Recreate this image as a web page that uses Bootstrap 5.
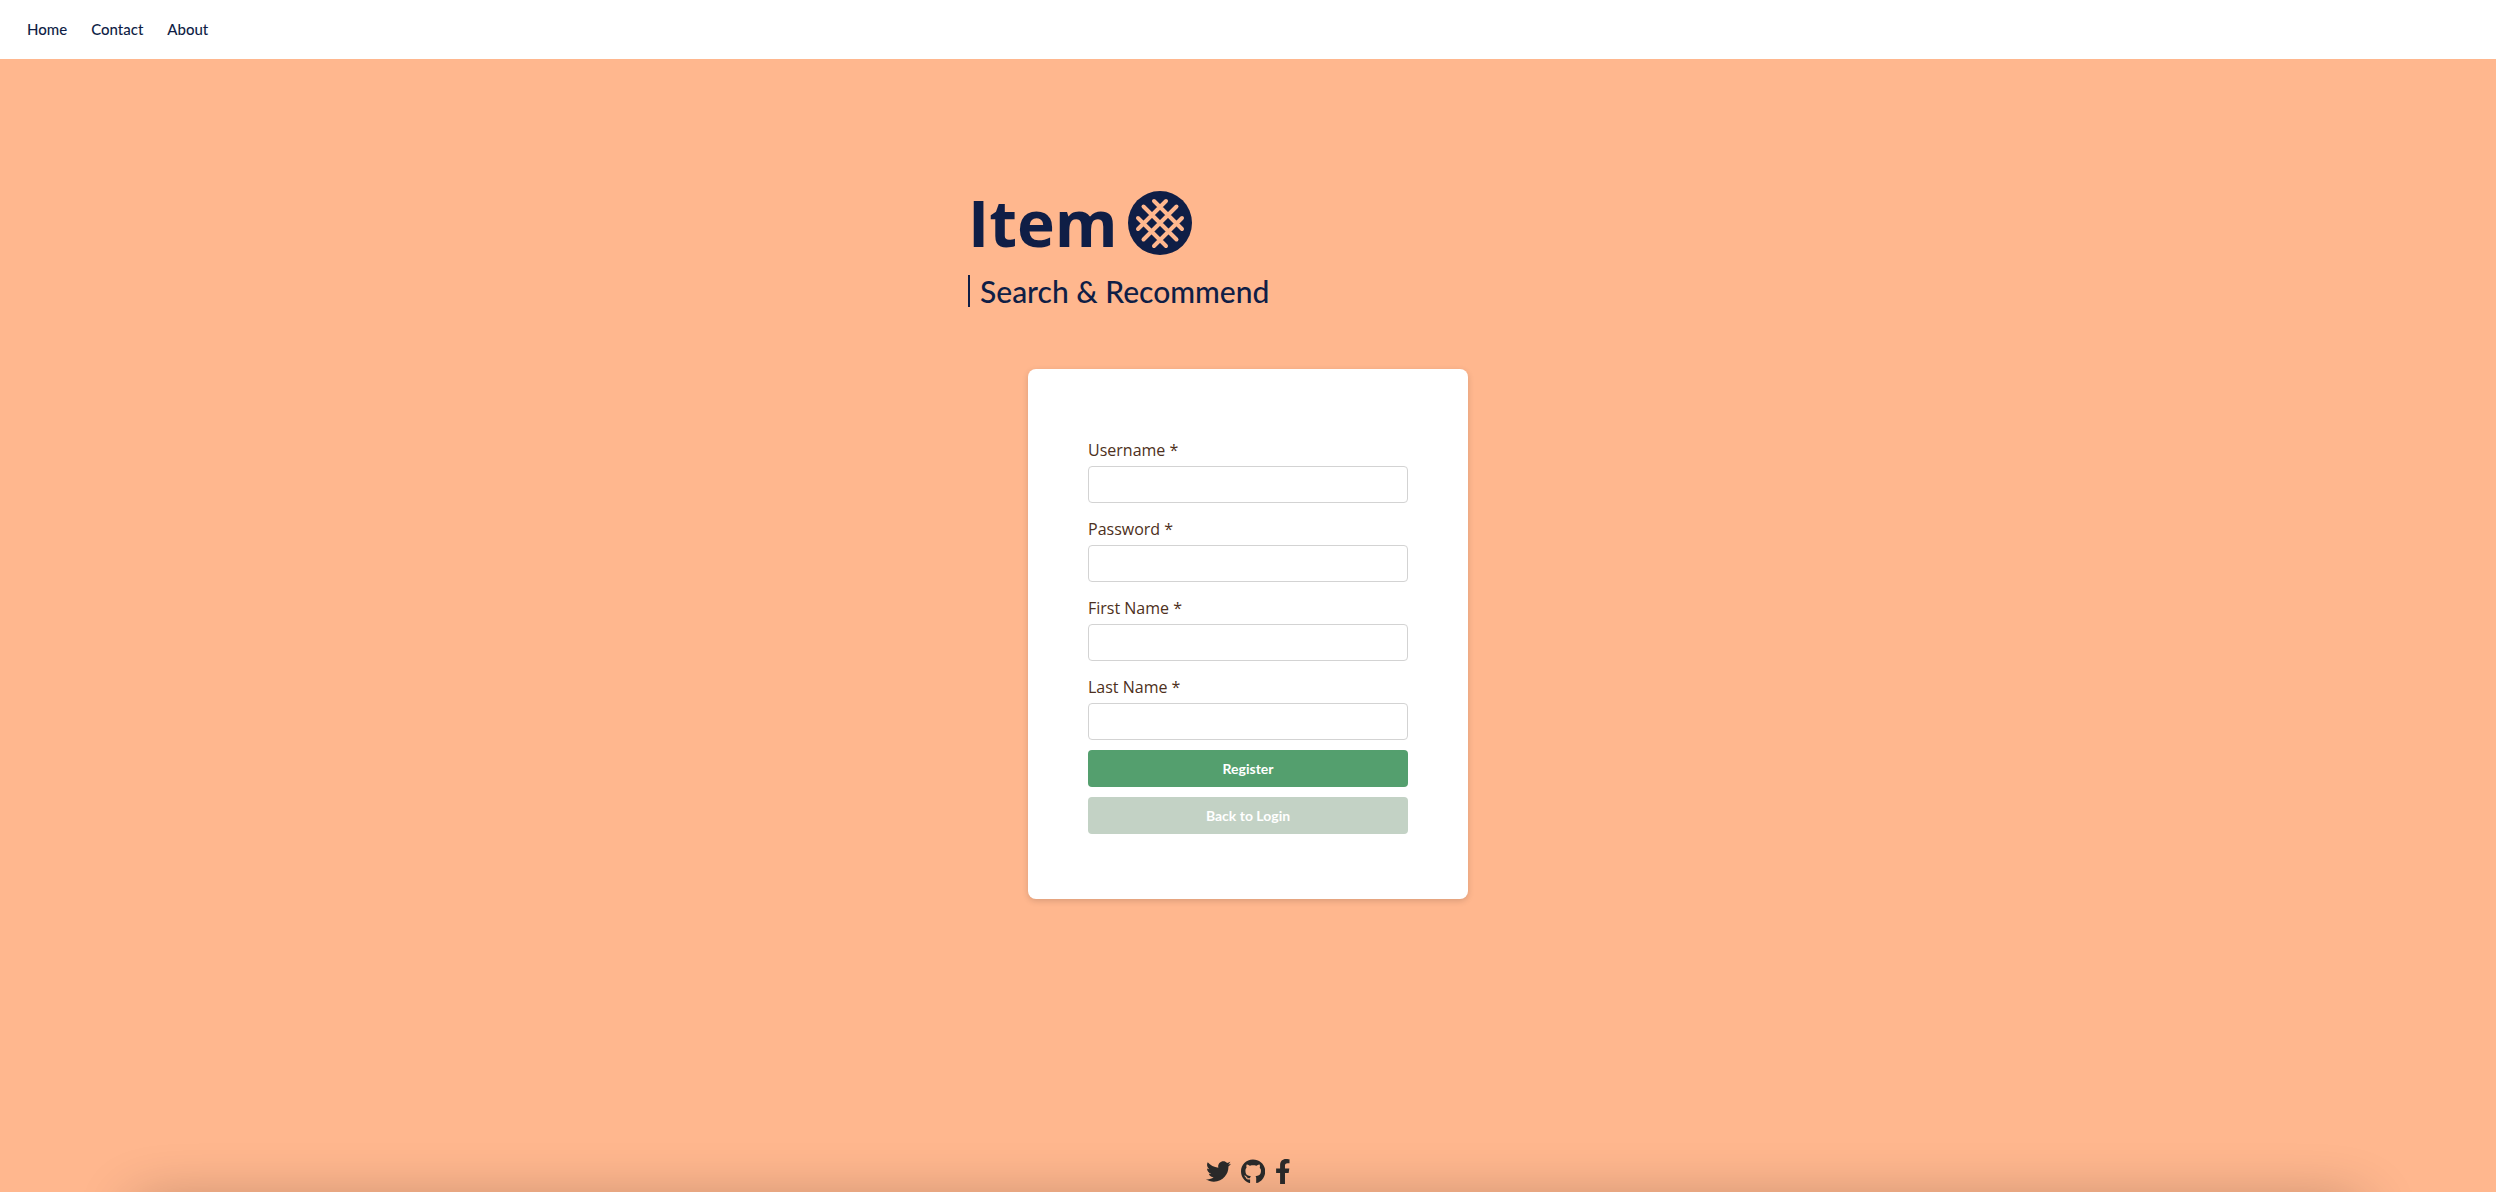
<!DOCTYPE html>
<html lang="en">
<head>
<meta charset="utf-8">
<meta name="viewport" content="width=device-width, initial-scale=1">
<title>Item | Register</title>
<link href="https://cdn.jsdelivr.net/npm/bootstrap@5.3.0/dist/css/bootstrap.min.css" rel="stylesheet">
<style>
  :root { --navy: #0f1e46; --peach: #ffb78e; --humanist: "Gill Sans", Lato, sans-serif; }
  body { background: var(--peach); font-family: "Open Sans", sans-serif; color: #4d3020; }
  .site-nav { background: #fff; padding: 17px 27px 18px; }
  .site-nav .nav { gap: 24px; }
  .site-nav .nav-link { padding: 0; color: var(--navy); font: 500 15px/24px var(--humanist); }
  .page-main { max-width: 560px; padding-top: 122px; }
  .brand { color: var(--navy); font-size: 64px; line-height: 84px; font-weight: 700; gap: 10px; }
  .brand svg { width: 64px; height: 64px; }
  .tagline { color: var(--navy); border-left: 2px solid; font: 500 30px/32px var(--humanist); margin: 10px 0 62px; padding-left: 10px; align-self: flex-start; }
  .signup { max-width: 440px; padding: 69px 60px 65px; border-radius: 8px; background: #fff; box-shadow: 0 2px 6px rgba(0, 0, 0, .15); }
  .signup .form-label { margin-bottom: 4px; line-height: 24px; }
  .signup .form-control { height: 37px; border-color: #d3d3d3; border-radius: 4px; }
  .fields { gap: 14px; margin-bottom: 10px; }
  .signup .btn { height: 37px; padding: 0; border: 0; border-radius: 4px; color: #fff; font: 700 14px/37px var(--humanist); }
  .btn-register { background: #549f6e; }
  .signup .btn-register:hover { background: #468a5e; }
  .btn-back { background: #c3d2c5; }
  .signup .btn-back:hover { background: #aec1b1; }
  .actions { gap: 10px; }
  .social { gap: 10px; padding-bottom: 8px; }
  .social a { color: #2b2b2b; display: flex; }
  .social svg { height: 25px; fill: currentColor; }
  .floor-shade { left: 136px; right: 136px; bottom: -40px; height: 40px; box-shadow: 0 14px 60px rgba(0, 0, 0, .32); pointer-events: none; }
</style>
</head>
<body>
<div class="d-flex flex-column min-vh-100 position-relative overflow-hidden">
  <header class="site-nav">
    <nav class="nav" aria-label="Main">
      <a class="nav-link" href="#">Home</a>
      <a class="nav-link" href="#">Contact</a>
      <a class="nav-link" href="#">About</a>
    </nav>
  </header>
  <main class="page-main w-100 mx-auto flex-grow-1 d-flex flex-column">
    <h1 class="brand d-flex align-items-center m-0">
      <span>Item</span>
      <svg viewBox="0 0 64 64" aria-hidden="true">
        <circle cx="32" cy="32" r="32" fill="#0f1e46"/>
        <g stroke="#ffb78e" stroke-width="4" stroke-linecap="round">
          <path d="M10 27 38 55M15.500 15.500 48.500 48.500M26 10 54 38M54 27 26 55M48.500 15.500 15.500 48.500M38 10 10 38"/>
        </g>
      </svg>
    </h1>
    <p class="tagline">Search &amp; Recommend</p>
    <form class="signup w-100 mx-auto" onsubmit="return false">
      <div class="fields d-flex flex-column">
        <div><label class="form-label d-block" for="username">Username *</label><input class="form-control" id="username" type="text"></div>
        <div><label class="form-label d-block" for="password">Password *</label><input class="form-control" id="password" type="password"></div>
        <div><label class="form-label d-block" for="first">First Name *</label><input class="form-control" id="first" type="text"></div>
        <div><label class="form-label d-block" for="last">Last Name *</label><input class="form-control" id="last" type="text"></div>
      </div>
      <div class="actions d-grid">
        <button class="btn btn-register" type="submit">Register</button>
        <button class="btn btn-back" type="button">Back to Login</button>
      </div>
    </form>
  </main>
  <footer class="social d-flex justify-content-center align-items-center">
    <a href="#" aria-label="Twitter"><svg viewBox="0 0 512 512"><path d="M459.370 151.716c.325 4.548.325 9.097.325 13.645 0 138.720-105.583 298.558-298.558 298.558-59.452 0-114.680-17.219-161.137-47.106 8.447.974 16.568 1.299 25.340 1.299 49.055 0 94.213-16.568 130.274-44.832-46.132-.975-84.792-31.188-98.112-72.772 6.498.974 12.995 1.624 19.818 1.624 9.421 0 18.843-1.300 27.614-3.573-48.081-9.747-84.143-51.980-84.143-102.985v-1.299c13.969 7.797 30.214 12.670 47.431 13.319-28.264-18.843-46.781-51.005-46.781-87.391 0-19.492 5.197-37.360 14.294-52.954 51.655 63.675 129.300 105.258 216.365 109.807-1.624-7.797-2.599-15.918-2.599-24.040 0-57.828 46.782-104.934 104.934-104.934 30.213 0 57.502 12.670 76.670 33.137 23.715-4.548 46.456-13.320 66.599-25.340-7.798 24.366-24.366 44.833-46.132 57.827 21.117-2.273 41.584-8.122 60.426-16.243-14.292 20.791-32.161 39.308-52.628 54.253z"/></svg></a>
    <a href="#" aria-label="GitHub"><svg viewBox="0 0 496 512"><path d="M165.900 397.400c0 2-2.300 3.600-5.200 3.600-3.300.3-5.600-1.300-5.600-3.600 0-2 2.300-3.600 5.200-3.600 3-.3 5.600 1.300 5.600 3.600zm-31.100-4.500c-.7 2 1.300 4.300 4.300 4.900 2.600 1 5.600 0 6.200-2s-1.300-4.300-4.300-5.200c-2.600-.7-5.500.3-6.200 2.300zm44.200-1.700c-2.900.7-4.900 2.600-4.600 4.900.3 2 2.900 3.300 5.900 2.600 2.900-.7 4.900-2.600 4.600-4.600-.3-1.900-3-3.200-5.900-2.900zM244.800 8C106.100 8 0 113.300 0 252c0 110.900 69.800 205.800 169.500 239.200 12.800 2.300 17.300-5.600 17.300-12.100 0-6.200-.3-40.400-.3-61.400 0 0-70 15-84.700-29.800 0 0-11.400-29.100-27.800-36.600 0 0-22.900-15.700 1.600-15.400 0 0 24.900 2 38.600 25.800 21.900 38.600 58.600 27.500 72.900 20.900 2.300-16 8.800-27.100 16-33.700-55.900-6.200-112.300-14.300-112.300-110.500 0-27.500 7.600-41.300 23.600-58.900-2.600-6.500-11.100-33.300 2.600-67.900 20.900-6.500 69 27 69 27 20-5.600 41.500-8.500 62.800-8.500s42.800 2.900 62.800 8.500c0 0 48.100-33.600 69-27 13.700 34.700 5.200 61.400 2.600 67.900 16 17.700 25.800 31.500 25.800 58.900 0 96.500-58.900 104.200-114.800 110.500 9.200 7.900 17 22.900 17 46.400 0 33.700-.3 75.400-.3 83.600 0 6.500 4.600 14.400 17.300 12.100C428.200 457.800 496 362.900 496 252 496 113.300 383.500 8 244.800 8z"/></svg></a>
    <a href="#" aria-label="Facebook"><svg viewBox="0 0 320 512"><path d="M279.140 288l14.220-92.660h-88.910v-60.130c0-25.350 12.420-50.060 52.240-50.060h40.420V6.260S260.430 0 225.360 0c-73.220 0-121.080 44.380-121.080 124.720v70.620H22.890V288h81.390v224h100.170V288z"/></svg></a>
  </footer>
  <div class="floor-shade position-absolute" aria-hidden="true"></div>
</div>
<script src="https://cdn.jsdelivr.net/npm/bootstrap@5.3.0/dist/js/bootstrap.bundle.min.js"></script>
</body>
</html>
